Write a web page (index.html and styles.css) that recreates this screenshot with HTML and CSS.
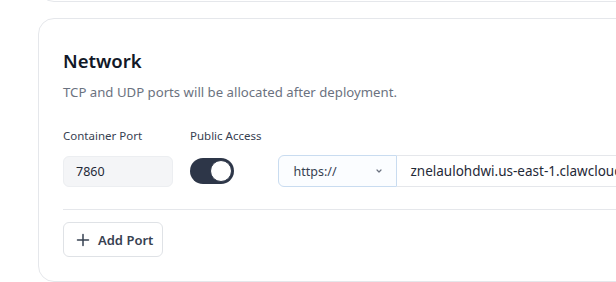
FILE: index.html
```html
<!DOCTYPE html>
<html lang="en">
<head>
  <meta charset="UTF-8" />
  <title>Network</title>
  <link rel="stylesheet" href="styles.css">
</head>
<body>
  <div class="page">
    <div class="card card-prev"></div>

    <section class="card">
      <h2>Network</h2>
      <p class="hint">TCP and UDP ports will be allocated after deployment.</p>

      <div class="port-row">
        <div class="field">
          <label>Container Port</label>
          <input type="text" class="port-input" value="7860">
        </div>
        <div class="field">
          <label>Public Access</label>
          <div class="toggle on"><span class="knob"></span></div>
        </div>
        <div class="field url-field">
          <div class="url-group">
            <div class="proto">
              <span>https://</span>
              <svg width="10" height="10" viewBox="0 0 10 10"><path d="M3 4l2 2 2-2" fill="none" stroke="#6b7280" stroke-width="1.2" stroke-linecap="round" stroke-linejoin="round"/></svg>
            </div>
            <div class="domain">znelaulohdwi.us-east-1.clawcloudrun.com</div>
          </div>
        </div>
      </div>

      <div class="divider"></div>

      <button class="add-btn">
        <svg width="14" height="14" viewBox="0 0 14 14"><path d="M7 1.5v11M1.5 7h11" stroke="#374151" stroke-width="1.5" stroke-linecap="round"/></svg>
        Add Port
      </button>
    </section>
  </div>
</body>
</html>
```

FILE: styles.css
```css
:root {
  --border: #e5e7eb;
  --text: #111827;
  --muted: #6b7280;
  --label: #374151;
}
body {
  margin: 0;
  overflow: hidden;
  font-family: "Noto Sans", "Open Sans", sans-serif;
  background: #fff;
  color: var(--text);
}
.page {
  width: 760px;
  padding-left: 38px;
  display: flex;
  flex-direction: column;
  gap: 16px;
}
.card {
  border: 1px solid var(--border);
  border-radius: 16px;
  padding: 24px;
  background: #fff;
}
.card-prev {
  margin-top: -40px;
  height: 42px;
  padding: 0;
  box-sizing: border-box;
}
h2 {
  margin: 5px 0 0;
  font-size: 18.5px;
  font-weight: 600;
  line-height: 26px;
}
.hint {
  margin: 9px 0 0;
  font-size: 13.2px;
  line-height: 18px;
  color: var(--muted);
}
.port-row {
  display: flex;
  align-items: flex-start;
  gap: 17px;
  margin-top: 27px;
}
.field {
  display: flex;
  flex-direction: column;
  gap: 12px;
}
.field label {
  font-size: 11.5px;
  line-height: 16px;
  color: var(--label);
}
.port-input {
  width: 110px;
  height: 31px;
  box-sizing: border-box;
  padding: 0 12px;
  border: 1px solid #eceef1;
  border-radius: 6px;
  background: #f4f5f7;
  font-family: inherit;
  font-size: 12.5px;
  color: #1f2937;
}
.toggle {
  width: 44px;
  height: 26px;
  border-radius: 13px;
  background: #2d3648;
  display: flex;
  align-items: center;
  justify-content: flex-end;
  padding: 2px;
  box-sizing: border-box;
  margin-top: 2px;
}
.knob {
  width: 22px;
  height: 22px;
  border-radius: 50%;
  background: #fff;
  box-sizing: border-box;
  border: 1px solid #2d3648;
}
.url-field {
  flex: 1;
  padding-top: 27px;
}
.url-group {
  display: flex;
  height: 32px;
}
.proto {
  width: 119px;
  box-sizing: border-box;
  border: 1px solid #c9dcf0;
  border-radius: 6px 0 0 6px;
  background: #fbfdff;
  display: flex;
  align-items: center;
  justify-content: space-between;
  padding: 0 12px 0 14px;
  font-size: 12.5px;
  color: #374151;
}
.domain {
  flex: 1;
  border-top: 1px solid var(--border);
  border-bottom: 1px solid var(--border);
  display: flex;
  align-items: center;
  padding-left: 13px;
  font-size: 13.5px;
  color: #1f2937;
  white-space: nowrap;
}
.divider {
  height: 1px;
  background: var(--border);
  margin-top: 22px;
}
.add-btn {
  margin-top: 12px;
  display: flex;
  align-items: center;
  gap: 8px;
  height: 35px;
  padding: 0 9px 0 12px;
  border: 1px solid #dfe2e6;
  border-radius: 6px;
  background: #fff;
  font-family: inherit;
  font-size: 13px;
  font-weight: 600;
  color: var(--label);
}
```
